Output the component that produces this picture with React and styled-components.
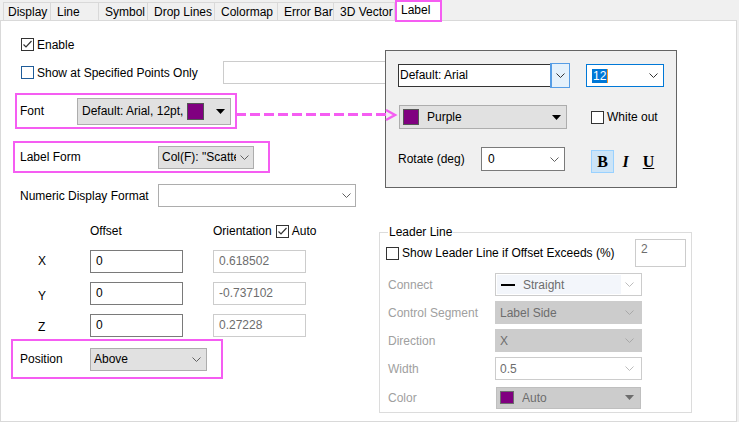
import React from "react";
import styled, { createGlobalStyle, css } from "styled-components";

const MAGENTA = "#f55df2";
const PURPLE = "#800080";

const GlobalStyle = createGlobalStyle`
  html, body {
    margin: 0;
    padding: 0;
    background: #f0f0f0;
  }
  body {
    font-family: "Liberation Sans", Arial, sans-serif;
    font-size: 12px;
    color: #000;
  }
`;

const Window = styled.div`
  width: 739px;
  height: 422px;
  display: flex;
  flex-direction: column;
  overflow: hidden;
  background: #f0f0f0;
`;

const TabBar = styled.div`
  display: flex;
  align-items: flex-end;
  height: 20px;
  padding-left: 3px;
  position: relative;
  z-index: 3;
`;

const Tab = styled.div`
  box-sizing: border-box;
  width: ${p => p.$w}px;
  height: 18px;
  padding-left: 6px;
  display: flex;
  align-items: center;
  border-top: 1px solid #d9d9d9;
  border-right: 1px solid #d9d9d9;
  ${p => p.$first && css`
    border-left: 1px solid #d9d9d9;
    padding-left: 4px;
  `}
  ${p => p.$active && css`
    height: 22px;
    margin-bottom: -2px;
    margin-left: 0;
    padding: 0 0 3px 4px;
    background: #fff;
    border: 2px solid ${MAGENTA};
  `}
`;

const Panel = styled.div`
  flex: 1;
  position: relative;
  margin-right: 2px;
  background: #fff;
  border: 1px solid #d9d9d9;
`;

const Content = styled.div`
  display: flex;
  flex-direction: column;
  align-items: flex-start;
  padding-top: 17px;
`;

const Box = styled.span`
  box-sizing: border-box;
  flex: none;
  width: 13px;
  height: 13px;
  background: #fff;
  border: 1px solid ${p => p.$border || "#333"};
  display: inline-flex;
  align-items: center;
  justify-content: center;
`;

const CheckBox = ({ checked, border }) => (
  <Box $border={border}>
    {checked && (
      <svg width="11" height="11" viewBox="0 0 11 11">
        <polyline points="1.5,5.5 4,8 9.5,2" fill="none" stroke="#333" strokeWidth="1.2" />
      </svg>
    )}
  </Box>
);

const CheckLabel = styled.label`
  display: flex;
  align-items: center;
  gap: 3px;
  color: ${p => p.$color || "#000"};
  width: ${p => (p.$w ? `${p.$w}px` : "auto")};
  flex: ${p => (p.$grow ? 1 : "none")};
`;

const Row = styled.div`
  box-sizing: border-box;
  display: flex;
  align-items: center;
  margin-top: ${p => p.$mt || 0}px;
  margin-left: ${p => p.$ml || 0}px;
  width: ${p => (p.$w ? `${p.$w}px` : "auto")};
  height: ${p => (p.$h ? `${p.$h}px` : "auto")};
  padding-left: ${p => p.$pl || 0}px;
  ${p => p.$hl && css`
    border: 2px solid ${MAGENTA};
  `}
`;

const FieldLabel = styled.span`
  flex: none;
  width: ${p => p.$w}px;
  color: ${p => p.$color || "#000"};
  padding-top: ${p => p.$pt || 0}px;
`;

const TextBox = styled.div`
  box-sizing: border-box;
  width: ${p => p.$w}px;
  height: ${p => p.$h || 23}px;
  border: 1px solid ${p => p.$border || "#7a7a7a"};
  background: #fff;
  color: ${p => p.$color || "#000"};
  padding: ${p => p.$pt || 3}px 5px 0 5px;
  line-height: 15px;
`;

const Select = styled.div`
  box-sizing: border-box;
  flex: none;
  display: flex;
  align-items: center;
  gap: 4px;
  width: ${p => p.$w}px;
  height: ${p => p.$h || 23}px;
  margin-left: ${p => p.$ml || 0}px;
  padding: 0 ${p => p.$pr ?? 7}px 0 ${p => p.$pl ?? 4}px;
  background: ${p => p.$bg || "#fff"};
  border: 1px solid ${p => p.$border || "#adadad"};
  color: ${p => p.$color || "#000"};
`;

const SelectText = styled.span`
  flex: 1;
  overflow: hidden;
  white-space: nowrap;
`;

const Swatch = styled.span`
  flex: none;
  width: ${p => p.$w}px;
  height: ${p => p.$h}px;
  background: ${PURPLE};
  border: 1px solid ${p => p.$border || "#555"};
  box-sizing: border-box;
  margin-right: ${p => p.$mr || 0}px;
`;

const Chevron = ({ color = "#606060" }) => (
  <svg width="9" height="5" viewBox="0 0 9 5" style={{ flex: "none" }}>
    <polyline points="0.5,0.5 4.5,4.5 8.5,0.5" fill="none" stroke={color} strokeWidth="1" />
  </svg>
);

const Triangle = ({ color = "#000" }) => (
  <svg width="9" height="5" viewBox="0 0 9 5" style={{ flex: "none" }}>
    <polygon points="0,0 9,0 4.5,5" fill={color} />
  </svg>
);

const Lower = styled.div`
  display: flex;
  align-items: flex-start;
  margin-top: 17px;
`;

const LeftColumn = styled.div`
  width: 378px;
  display: flex;
  flex-direction: column;
  align-items: flex-start;
`;

const Table = styled.div`
  display: grid;
  grid-template-columns: 89px 123px auto;
  grid-template-rows: 17px repeat(3, 23px);
  row-gap: 9px;
`;

const HeadCell = styled.div`
  display: flex;
  align-items: flex-start;
  gap: 4px;
  line-height: 14px;
`;

const AxisLabel = styled.div`
  padding-left: 37px;
  padding-top: ${p => p.$pt || 4}px;
`;

const GroupBox = styled.fieldset`
  box-sizing: border-box;
  width: 313px;
  margin: 1px 0 0 0;
  padding: 0 5px 3px 6px;
  border: 1px solid #dcdcdc;
  min-width: 0;
`;

const Legend = styled.legend`
  padding: 0 1px;
  margin-left: 2px;
  line-height: 14px;
`;

const LeaderTop = styled.div`
  display: flex;
  align-items: center;
  height: 28px;
`;

const LeaderRow = styled.div`
  display: flex;
  align-items: center;
  height: 23px;
  margin-top: ${p => p.$mt || 5}px;
  padding-left: 2px;
`;

const LineSample = styled.span`
  flex: none;
  width: 14px;
  height: 2px;
  background: #000;
  margin: 0 8px 0 4px;
`;

const Highlight = styled.span`
  display: flex;
  align-items: center;
  flex: 1;
  height: 19px;
  background: #f3f6fb;
  color: #6d6d6d;
`;

const Popup = styled.div`
  position: absolute;
  left: 384px;
  top: 29px;
  z-index: 4;
  box-sizing: border-box;
  width: 292px;
  height: 138px;
  padding: 13px 0 0 12px;
  background: #f0f0f0;
  border: 1px solid #646464;
  display: grid;
  grid-template-columns: 171px 78px;
  grid-template-rows: 23px 24px 24px;
  column-gap: 17px;
  row-gap: 18px;
`;

const Cell = styled.div`
  display: flex;
  align-items: center;
  padding-left: ${p => p.$pl || 0}px;
  gap: ${p => p.$gap || 0}px;
`;

const FontCombo = styled.div`
  box-sizing: border-box;
  width: 171px;
  height: 23px;
  display: flex;
  background: #fff;
  border: 1px solid #333;
`;

const ComboText = styled.span`
  flex: 1;
  padding-left: 1px;
  line-height: 21px;
`;

const ComboButton = styled.span`
  box-sizing: border-box;
  width: 18px;
  display: flex;
  align-items: center;
  justify-content: center;
  background: #e5f1fb;
  border-left: 1px solid #569de5;
  margin: -1px -1px -1px 0;
  outline: 1px solid #569de5;
`;

const Selected = styled.span`
  background: #0078d7;
  color: #fff;
  padding: 0 1px;
  border-right: 1px solid #f39c32;
`;

const StyleButton = styled.span`
  box-sizing: border-box;
  width: 23px;
  height: 23px;
  display: flex;
  align-items: center;
  justify-content: center;
  font-family: "Liberation Serif", "Times New Roman", serif;
  font-size: 16px;
  font-weight: bold;
  font-style: ${p => (p.$italic ? "italic" : "normal")};
  text-decoration: ${p => (p.$underline ? "underline" : "none")};
  border: 1px solid ${p => (p.$active ? "#99d1ff" : "transparent")};
  background: ${p => (p.$active ? "#cce4f7" : "transparent")};
`;

const Arrow = styled.svg`
  position: absolute;
  left: 235px;
  top: 87px;
  z-index: 5;
  overflow: visible;
`;

const tabs = [
  { name: "Display", w: 48 },
  { name: "Line", w: 48 },
  { name: "Symbol", w: 49 },
  { name: "Drop Lines", w: 67 },
  { name: "Colormap", w: 63 },
  { name: "Error Bar", w: 56 },
  { name: "3D Vector", w: 61 },
  { name: "Label", w: 47, active: true }
];

const axes = [
  { name: "X", orient: "0.618502", pt: 4 },
  { name: "Y", orient: "-0.737102", pt: 7 },
  { name: "Z", orient: "0.27228", pt: 6 }
];

export default function App() {
  return (
    <Window>
      <GlobalStyle />
      <TabBar>
        {tabs.map((t, i) => (
          <Tab key={t.name} $w={t.w} $first={i === 0} $active={t.active}>
            {t.name}
          </Tab>
        ))}
      </TabBar>
      <Panel>
        <Content>
          <Row $ml={20} $h={13}>
            <CheckLabel>
              <CheckBox checked />
              Enable
            </CheckLabel>
          </Row>
          <Row $ml={20} $mt={10} $h={23}>
            <CheckLabel $w={202}>
              <CheckBox border="#1f5c99" />
              Show at Specified Points Only
            </CheckLabel>
            <TextBox $w={330} $border="#cccccc" />
          </Row>

          <Row $hl $ml={14} $mt={9} $w={222} $h={36} $pl={3}>
            <FieldLabel $w={57}>Font</FieldLabel>
            <Select $w={154} $h={27} $bg="#e1e1e1" $pl={4} $pr={5}>
              <SelectText>Default: Arial, 12pt,</SelectText>
              <Swatch $w={17} $h={17} $mr={8} />
              <Triangle />
            </Select>
          </Row>

          <Row $hl $ml={12} $mt={12} $w={257} $h={32} $pl={5}>
            <FieldLabel $w={138} $pt={0}>Label Form</FieldLabel>
            <Select $w={96} $bg="#e1e1e1" $pl={3} $pr={4}>
              <SelectText>Col(F): "Scatter"</SelectText>
              <Chevron />
            </Select>
          </Row>

          <Row $ml={19} $mt={11} $h={23}>
            <FieldLabel $w={138}>Numeric Display Format</FieldLabel>
            <Select $w={198} $pr={4}>
              <SelectText />
              <Chevron />
            </Select>
          </Row>

          <Lower>
            <LeftColumn>
              <Table>
                <div />
                <HeadCell>Offset</HeadCell>
                <HeadCell>
                  Orientation
                  <CheckLabel>
                    <CheckBox checked />
                    Auto
                  </CheckLabel>
                </HeadCell>
                {axes.map(a => (
                  <React.Fragment key={a.name}>
                    <AxisLabel $pt={a.pt}>{a.name}</AxisLabel>
                    <div>
                      <TextBox $w={93}>0</TextBox>
                    </div>
                    <div>
                      <TextBox $w={93} $border="#cccccc" $color="#6d6d6d">
                        {a.orient}
                      </TextBox>
                    </div>
                  </React.Fragment>
                ))}
              </Table>

              <Row $hl $ml={10} $mt={2} $w={212} $h={40} $pl={7}>
                <FieldLabel $w={70}>Position</FieldLabel>
                <Select $w={117} $bg="#e1e1e1" $pl={3} $pr={5}>
                  <SelectText>Above</SelectText>
                  <Chevron />
                </Select>
              </Row>
            </LeftColumn>

            <GroupBox>
              <Legend>Leader Line</Legend>
              <LeaderTop>
                <CheckLabel $grow>
                  <CheckBox />
                  Show Leader Line if Offset Exceeds (%)
                </CheckLabel>
                <TextBox $w={51} $h={28} $border="#cccccc" $color="#6d6d6d" $pt={2}>
                  2
                </TextBox>
              </LeaderTop>
              <LeaderRow $mt={6}>
                <FieldLabel $w={107} $color="#a0a0a0">Connect</FieldLabel>
                <Select $w={147} $border="#cccccc" $pl={1} $pr={7}>
                  <Highlight>
                    <LineSample />
                    Straight
                  </Highlight>
                  <Chevron color="#bdbdbd" />
                </Select>
              </LeaderRow>
              <LeaderRow>
                <FieldLabel $w={107} $color="#a0a0a0">Control Segment</FieldLabel>
                <Select $w={147} $bg="#cccccc" $border="#cccccc" $color="#6d6d6d" $pl={4}>
                  <SelectText>Label Side</SelectText>
                  <Chevron color="#a8a8a8" />
                </Select>
              </LeaderRow>
              <LeaderRow>
                <FieldLabel $w={107} $color="#a0a0a0">Direction</FieldLabel>
                <Select $w={147} $bg="#cccccc" $border="#cccccc" $color="#6d6d6d" $pl={4}>
                  <SelectText>X</SelectText>
                  <Chevron color="#a8a8a8" />
                </Select>
              </LeaderRow>
              <LeaderRow>
                <FieldLabel $w={107} $color="#a0a0a0">Width</FieldLabel>
                <Select $w={147} $border="#cccccc" $color="#6d6d6d" $pl={4}>
                  <SelectText>0.5</SelectText>
                  <Chevron color="#bdbdbd" />
                </Select>
              </LeaderRow>
              <LeaderRow $mt={6}>
                <FieldLabel $w={107} $color="#a0a0a0">Color</FieldLabel>
                <Select $w={145} $h={22} $ml={1} $bg="#cccccc" $border="#bfbfbf" $color="#6d6d6d" $pl={3} $pr={6}>
                  <Swatch $w={14} $h={13} $mr={4} $border="#6d6d6d" />
                  <SelectText>Auto</SelectText>
                  <Triangle color="#6d6d6d" />
                </Select>
              </LeaderRow>
            </GroupBox>
          </Lower>
        </Content>

        <Arrow width="162" height="14" viewBox="0 0 162 14">
          <line x1="0" y1="6.5" x2="152" y2="6.5" stroke={MAGENTA} strokeWidth="3" strokeDasharray="10 4" />
          <polyline points="150,2 159,7 150,12" fill="none" stroke={MAGENTA} strokeWidth="2.5" />
        </Arrow>

        <Popup>
          <Cell>
            <FontCombo>
              <ComboText>Default: Arial</ComboText>
              <ComboButton>
                <Chevron color="#333" />
              </ComboButton>
            </FontCombo>
          </Cell>
          <Cell>
            <Select $w={78} $border="#0078d7" $pl={5} $pr={5}>
              <SelectText>
                <Selected>12</Selected>
              </SelectText>
              <Chevron color="#333" />
            </Select>
          </Cell>
          <Cell $pl={1}>
            <Select $w={168} $h={24} $bg="#e1e1e1" $pl={3} $pr={5}>
              <Swatch $w={16} $h={16} $mr={4} />
              <SelectText>Purple</SelectText>
              <Triangle />
            </Select>
          </Cell>
          <Cell $pl={5}>
            <CheckLabel>
              <CheckBox />
              White out
            </CheckLabel>
          </Cell>
          <Cell>
            <FieldLabel $w={83}>Rotate (deg)</FieldLabel>
            <Select $w={84} $h={24} $border="#7a7a7a" $pl={6} $pr={5}>
              <SelectText>0</SelectText>
              <Chevron />
            </Select>
          </Cell>
          <Cell $pl={5} style={{ marginTop: 5 }}>
            <StyleButton $active>B</StyleButton>
            <StyleButton $italic>I</StyleButton>
            <StyleButton $underline>U</StyleButton>
          </Cell>
        </Popup>
      </Panel>
    </Window>
  );
}
